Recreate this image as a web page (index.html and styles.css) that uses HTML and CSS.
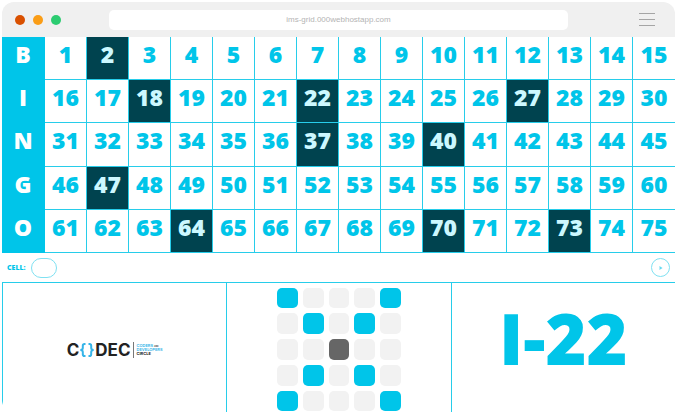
FILE: index.html
```html
<!DOCTYPE html>
<html lang="en">
<head>
<meta charset="utf-8">
<title>Bingo</title>
<link rel="stylesheet" href="styles.css">
</head>
<body>
<div class="window">
  <header class="chrome">
    <div class="lights"><span class="light red"></span><span class="light amber"></span><span class="light green"></span></div>
    <input class="address" type="text" aria-label="Address" value="ims-grid.000webhostapp.com" readonly>
    <button class="menu" type="button" aria-label="Menu"><span></span><span></span><span></span></button>
  </header>
  <main class="page">
    <table class="board">
      <tbody>
        <tr><th scope="row">B</th><td>1</td><td class="hit">2</td><td>3</td><td>4</td><td>5</td><td>6</td><td>7</td><td>8</td><td>9</td><td>10</td><td>11</td><td>12</td><td>13</td><td>14</td><td>15</td></tr>
        <tr><th scope="row">I</th><td>16</td><td>17</td><td class="hit">18</td><td>19</td><td>20</td><td>21</td><td class="hit">22</td><td>23</td><td>24</td><td>25</td><td>26</td><td class="hit">27</td><td>28</td><td>29</td><td>30</td></tr>
        <tr><th scope="row">N</th><td>31</td><td>32</td><td>33</td><td>34</td><td>35</td><td>36</td><td class="hit">37</td><td>38</td><td>39</td><td class="hit">40</td><td>41</td><td>42</td><td>43</td><td>44</td><td>45</td></tr>
        <tr><th scope="row">G</th><td>46</td><td class="hit">47</td><td>48</td><td>49</td><td>50</td><td>51</td><td>52</td><td>53</td><td>54</td><td>55</td><td>56</td><td>57</td><td>58</td><td>59</td><td>60</td></tr>
        <tr><th scope="row">O</th><td>61</td><td>62</td><td>63</td><td class="hit">64</td><td>65</td><td>66</td><td>67</td><td>68</td><td>69</td><td class="hit">70</td><td>71</td><td>72</td><td class="hit">73</td><td>74</td><td>75</td></tr>
      </tbody>
    </table>
    <form class="controls">
      <label class="cell-label" for="cell">CELL:</label>
      <input class="cell-input" id="cell" type="text">
      <button class="next" type="button" aria-label="Next">
        <svg width="4" height="4" viewBox="0 0 5 5"><path d="M0 0.500h1.500L4.500 2.500 1.500 4.500H0l1-2z"/></svg>
      </button>
    </form>
    <div class="panels">
      <section class="panel">
        <div class="logo">
          <span class="logo-name">C</span>
          <svg class="braces" width="16" height="14" viewBox="0 0 16 14"><path d="M6.500 1H5.500Q3.800 1 3.800 2.800V5Q3.800 7 1.300 7 3.800 7 3.800 9v2.200Q3.800 13 5.500 13h1M9.500 1h1q1.700 0 1.700 1.800V5q0 2 2.500 2-2.500 0-2.500 2v2.200Q12.200 13 10.500 13h-1"/></svg>
          <span class="logo-name">DEC</span>
          <p class="logo-tag"><span>CODERS <small>AND</small></span><span>DEVELOPERS</span><b>CIRCLE</b></p>
        </div>
      </section>
      <section class="panel">
        <div class="pattern">
          <i class="on"></i><i></i><i></i><i></i><i class="on"></i>
          <i></i><i class="on"></i><i></i><i class="on"></i><i></i>
          <i></i><i></i><i class="free"></i><i></i><i></i>
          <i></i><i class="on"></i><i></i><i class="on"></i><i></i>
          <i class="on"></i><i></i><i></i><i></i><i class="on"></i>
        </div>
      </section>
      <section class="panel">
        <p class="call">I-22</p>
      </section>
    </div>
  </main>
</div>
</body>
</html>
```
FILE: styles.css
```css
:root {
  --cyan: #00c5e9;
  --line: #27cdea;
  --dark: #00434f;
}

* {
  box-sizing: border-box;
}

body {
  margin: 0;
  padding: 2px 2px 4px;
  min-height: 100vh;
  display: flex;
  background: #fff;
  font-family: "Open Sans", sans-serif;
}

.window {
  flex: 1;
  display: flex;
  flex-direction: column;
  overflow: hidden;
  border-radius: 12px;
}

.chrome {
  display: grid;
  grid-template-columns: 1fr 68.2% 1fr;
  align-items: center;
  height: 35px;
  background: #f0f0f0;
}

.lights {
  display: flex;
  gap: 8px;
  padding-left: 13px;
}

.light {
  width: 10px;
  height: 10px;
  border-radius: 50%;
}

.red { background: #d95000; }
.amber { background: #fa9d16; }
.green { background: #2ccc71; }

.address {
  width: 100%;
  height: 20px;
  padding: 0;
  border: 0;
  border-radius: 5px;
  background: #fff;
  color: #b4b4b4;
  font: 8px "Liberation Sans", sans-serif;
  text-align: center;
}

.menu {
  justify-self: end;
  display: flex;
  flex-direction: column;
  gap: 5px;
  width: 16px;
  margin-right: 20px;
  padding: 0;
  border: 0;
  background: none;
}

.menu span {
  height: 1px;
  background: #a5a5a5;
}

.page {
  flex: 1;
  display: flex;
  flex-direction: column;
}

.board {
  width: 100%;
  height: 216px;
  table-layout: fixed;
  border-spacing: 0;
  color: var(--cyan);
  font-size: 23px;
  font-weight: 800;
  line-height: 32px;
  text-align: center;
}

.board th,
.board td {
  padding: 0 0 8px;
  border-right: 1px solid var(--line);
  border-bottom: 1px solid var(--line);
}

.board th {
  width: 43px;
  border-color: var(--cyan);
  background: var(--cyan);
  color: #fff;
  font-weight: 800;
}

.board td:last-child {
  border-right: 0;
}

.board .hit {
  background: var(--dark);
  color: #ccf8ff;
}

.controls {
  display: flex;
  align-items: center;
  gap: 5px;
  height: 29px;
  padding: 0 5px;
}

.cell-label {
  color: var(--cyan);
  font-size: 7px;
  font-weight: 800;
}

.cell-input {
  width: 26px;
  height: 20px;
  padding: 0 6px;
  border: 1px solid #7fe1f2;
  border-radius: 10px;
  background: #fff;
  color: var(--cyan);
  font: inherit;
  font-size: 8px;
}

.next {
  display: flex;
  align-items: center;
  justify-content: center;
  width: 19px;
  height: 19px;
  margin-left: auto;
  padding: 0;
  border: 1px solid #7fe1f2;
  border-radius: 50%;
  background: #fff;
}

.next svg {
  fill: #66daf0;
}

.panels {
  flex: 1;
  display: grid;
  grid-template-columns: repeat(3, 1fr);
  border-top: 1px solid var(--line);
}

.panel {
  display: flex;
  align-items: center;
  justify-content: center;
  border-left: 1px solid var(--line);
}

.logo {
  display: flex;
  align-items: center;
  padding-top: 4px;
  color: #222;
}

.logo-name {
  font: 700 17px/16px "Inter", sans-serif;
}

.braces {
  fill: none;
  stroke: #35b4e8;
  stroke-width: 2;
}

.logo-tag {
  display: flex;
  flex-direction: column;
  margin: 0 0 0 2px;
  padding: 2px 0 2px 3px;
  border-left: 1px solid #777;
  color: #35b4e8;
  font: 600 4px/4px "Inter", sans-serif;
}

.logo-tag small {
  color: #222;
  font-size: 2px;
}

.logo-tag b {
  color: #222;
  font-weight: 700;
}

.pattern {
  display: grid;
  grid-template-columns: repeat(5, 1fr);
  gap: 5px;
  width: 124px;
  padding-top: 4px;
}

.pattern i {
  aspect-ratio: 1;
  border-radius: 5px;
  background: #f2f2f2;
}

.pattern .on {
  background: var(--cyan);
}

.pattern .free {
  background: #666;
}

.call {
  margin: 0;
  padding-bottom: 20px;
  color: var(--cyan);
  font-size: 70px;
  font-weight: 800;
  line-height: 96px;
}
```
